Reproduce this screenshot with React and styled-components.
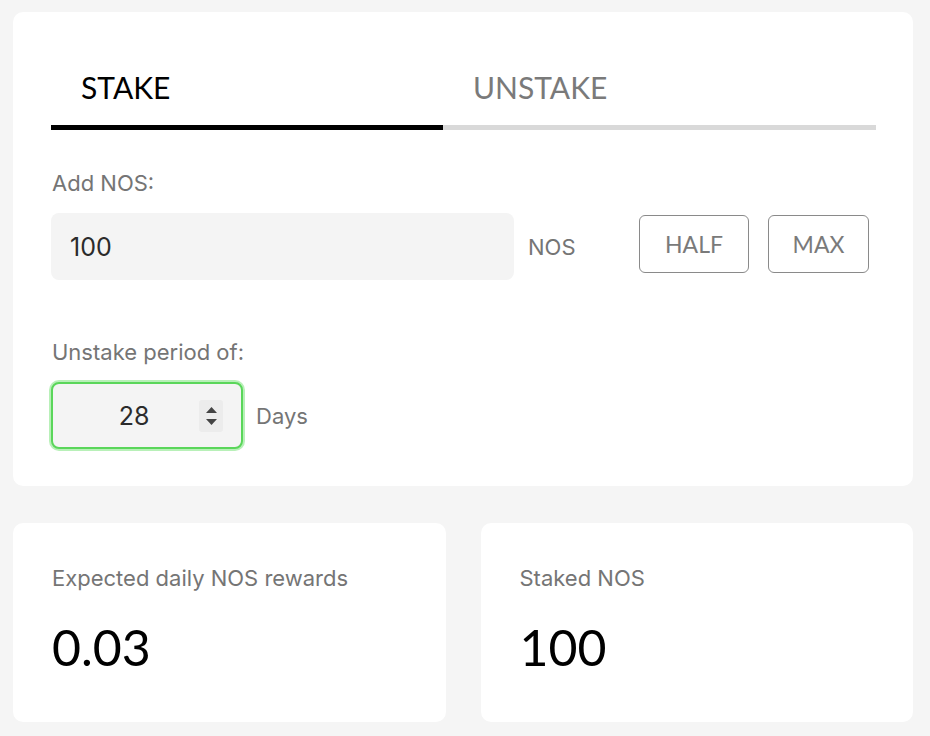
import React, { useState } from "react";
import styled, { createGlobalStyle } from "styled-components";

const GlobalStyle = createGlobalStyle`
  * { box-sizing: border-box; }
  body {
    margin: 0;
    background: #f5f5f5;
    font-family: "Lato", "Noto Sans", sans-serif;
  }
`;

const textFont = `"Inter", "Lato", sans-serif`;

const Page = styled.div`
  width: 930px;
  padding: 12px 17px 0 13px;
  display: flex;
  flex-direction: column;
  gap: 37px;
`;

const Card = styled.div`
  background: #fff;
  border-radius: 10px;
  padding: 0 37px 37px 38px;
`;

const Tabs = styled.div`
  display: grid;
  grid-template-columns: 392px 1fr;
`;

const Tab = styled.button`
  border: none;
  background: none;
  text-align: left;
  font-family: inherit;
  font-size: 30px;
  line-height: 36px;
  padding: 57px 30px 20px;
  color: ${(p) => (p.$active ? "#000" : "#7a7a7a")};
  border-bottom: 5px solid ${(p) => (p.$active ? "#000" : "#d9d9d9")};
  cursor: pointer;
`;

const Label = styled.div`
  font-family: ${textFont};
  font-size: 22px;
  line-height: 24px;
  color: #757575;
  margin-top: ${(p) => p.$top}px;
  margin-bottom: 18px;
  padding-left: 1px;
`;

const Row = styled.div`
  display: flex;
  align-items: center;
`;

const AmountInput = styled.input`
  width: 463px;
  height: 67px;
  border: none;
  border-radius: 8px;
  background: #f4f4f4;
  padding: 0 19px;
  font-family: ${textFont};
  font-size: 25px;
  color: #2b2b2b;
  outline: none;
`;

const Unit = styled.span`
  font-family: ${textFont};
  font-size: 22px;
  color: #757575;
  margin-left: ${(p) => p.$gap}px;
`;

const Buttons = styled.div`
  display: flex;
  gap: 19px;
  margin-left: auto;
  margin-right: 7px;
  margin-top: -5px;
`;

const Pill = styled.button`
  width: ${(p) => p.$w}px;
  height: 58px;
  border: 1px solid #8a8a8a;
  border-radius: 6px;
  background: #fff;
  font-family: inherit;
  font-size: 23px;
  color: #7a7a7a;
  cursor: pointer;
`;

const PeriodBox = styled.div`
  width: 192px;
  height: 67px;
  border: 2px solid #5ad65a;
  box-shadow: 0 0 0 2px #b8f0b8;
  border-radius: 8px;
  background: #f4f4f4;
  display: flex;
  align-items: center;
  padding-right: 18px;
`;

const PeriodValue = styled.span`
  flex: 1;
  text-align: center;
  padding-left: 16px;
  font-family: ${textFont};
  font-size: 25px;
  color: #2b2b2b;
`;

const Spinner = styled.div`
  width: 24px;
  height: 32px;
  background: #ececec;
  border-radius: 3px;
  display: flex;
  flex-direction: column;
  align-items: center;
  justify-content: center;
  gap: 6px;
`;

const Stats = styled.div`
  display: grid;
  grid-template-columns: 1fr 1fr;
  gap: 35px;
`;

const StatCard = styled.div`
  background: #fff;
  border-radius: 10px;
  height: 199px;
  padding: 42px 38px 0 39px;
`;

const StatLabel = styled.div`
  font-family: ${textFont};
  font-size: 22px;
  line-height: 26px;
  color: #757575;
`;

const StatValue = styled.div`
  font-size: 50px;
  line-height: 56px;
  color: #000;
  margin-top: 28px;
`;

export default function App() {
  const [tab, setTab] = useState("stake");
  const [amount, setAmount] = useState("100");

  return (
    <>
      <GlobalStyle />
      <Page>
        <Card>
          <Tabs>
            <Tab $active={tab === "stake"} onClick={() => setTab("stake")}>
              STAKE
            </Tab>
            <Tab $active={tab === "unstake"} onClick={() => setTab("unstake")}>
              UNSTAKE
            </Tab>
          </Tabs>
          <Label $top={41}>Add NOS:</Label>
          <Row>
            <AmountInput value={amount} onChange={(e) => setAmount(e.target.value)} />
            <Unit $gap={14}>NOS</Unit>
            <Buttons>
              <Pill $w={110}>HALF</Pill>
              <Pill $w={101}>MAX</Pill>
            </Buttons>
          </Row>
          <Label $top={60}>Unstake period of:</Label>
          <Row>
            <PeriodBox>
              <PeriodValue>28</PeriodValue>
              <Spinner>
                <svg width="11" height="6" viewBox="0 0 11 6">
                  <path d="M5.5 0L11 6H0z" fill="#444" />
                </svg>
                <svg width="11" height="6" viewBox="0 0 11 6">
                  <path d="M0 0h11L5.5 6z" fill="#444" />
                </svg>
              </Spinner>
            </PeriodBox>
            <Unit $gap={13}>Days</Unit>
          </Row>
        </Card>
        <Stats>
          <StatCard>
            <StatLabel>Expected daily NOS rewards</StatLabel>
            <StatValue>0.03</StatValue>
          </StatCard>
          <StatCard>
            <StatLabel>Staked NOS</StatLabel>
            <StatValue>100</StatValue>
          </StatCard>
        </Stats>
      </Page>
    </>
  );
}
